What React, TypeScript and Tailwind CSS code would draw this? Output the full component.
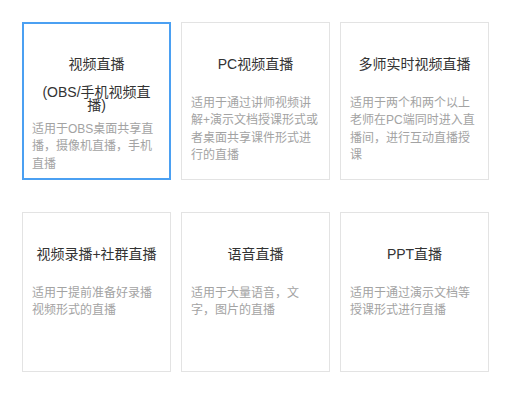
import React from 'react';

type Mode = {
  title: string;
  sub?: string;
  desc: string;
  active?: boolean;
};

const ROW1: Mode[] = [
  {
    title: '视频直播',
    sub: '(OBS/手机视频直播)',
    desc: '适用于OBS桌面共享直播，摄像机直播，手机直播',
    active: true,
  },
  { title: 'PC视频直播', desc: '适用于通过讲师视频讲解+演示文档授课形式或者桌面共享课件形式进行的直播' },
  { title: '多师实时视频直播', desc: '适用于两个和两个以上老师在PC端同时进入直播间，进行互动直播授课' },
];

const ROW2: Mode[] = [
  { title: '视频录播+社群直播', desc: '适用于提前准备好录播视频形式的直播' },
  { title: '语音直播', desc: '适用于大量语音，文字，图片的直播' },
  { title: 'PPT直播', desc: '适用于通过演示文档等授课形式进行直播' },
];

function ModeCard({ mode, height }: { mode: Mode; height: string }) {
  return (
    <div
      className={`flex w-[149px] flex-col bg-white ${height} ${
        mode.active
          ? 'border-2 border-[#4ba0f2] px-[8px] pt-[30px]'
          : 'border border-[#e3e3e3] px-[9px] pt-[31px]'
      }`}
    >
      <div className="mx-[3px] text-center text-[14px] leading-[20px] text-[#333]">{mode.title}</div>
      {mode.sub && (
        <div className="mx-[3px] mt-[12px] text-center text-[14px] leading-[13px] text-[#333]">{mode.sub}</div>
      )}
      <p
        className={`text-[12px] leading-[17.4px] text-[#a3a3a3] ${mode.sub ? 'mt-[9px]' : 'mt-[21px]'}`}
      >
        {mode.desc}
      </p>
    </div>
  );
}

export default function App() {
  return (
    <div
      className="h-[394px] w-[514px] bg-white pl-[22px] pt-[22px]"
      style={{ fontFamily: '"Liberation Sans", "Noto Sans CJK SC", sans-serif' }}
    >
      <div className="flex gap-[10px]">
        {ROW1.map((m) => (
          <ModeCard key={m.title} mode={m} height="h-[158px]" />
        ))}
      </div>
      <div className="mt-[32px] flex gap-[10px]">
        {ROW2.map((m) => (
          <ModeCard key={m.title} mode={m} height="h-[160px]" />
        ))}
      </div>
    </div>
  );
}
